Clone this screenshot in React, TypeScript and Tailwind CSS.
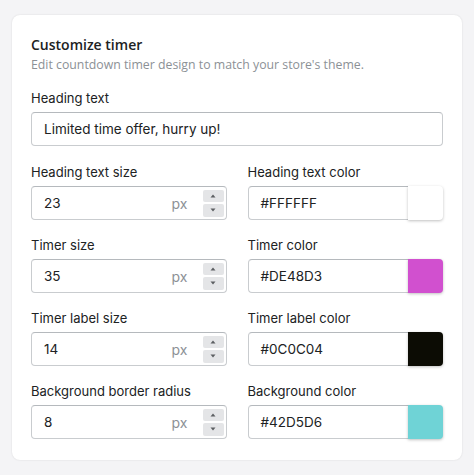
import React from "react";

const ui = { fontFamily: "Inter, 'Liberation Sans', sans-serif" };
const geo = { fontFamily: "'Open Sans', Lato, sans-serif" };

function Label({ children }: { children: React.ReactNode }) {
  return (
    <div className="mb-[4px] h-[20px] text-[13px] leading-[20px] text-[#202223]" style={ui}>
      {children}
    </div>
  );
}

function NumberField({ label, value }: { label: string; value: string }) {
  return (
    <div>
      <Label>{label}</Label>
      <div className="flex h-[34px] items-center rounded-[4px] border border-[#c9cccf] border-t-[#b5b9bd] bg-white pl-[12px] pr-[2px]" style={ui}>
        <span className="flex-1 text-[13.5px] text-[#202223]">{value}</span>
        <span className="mr-[15px] text-[14px] text-[#8c9196]">px</span>
        <div className="flex flex-col gap-[2px]">
          <button className="flex h-[12px] w-[21px] items-center justify-center rounded-[2px] bg-[#e4e5e7]">
            <svg width="6" height="4" viewBox="0 0 6 4"><path d="M3 0.5 L5.5 3.5 H0.5 Z" fill="#5c5f62" /></svg>
          </button>
          <button className="flex h-[13px] w-[21px] items-center justify-center rounded-[2px] bg-[#e4e5e7]">
            <svg width="6" height="4" viewBox="0 0 6 4"><path d="M0.5 0.5 H5.5 L3 3.5 Z" fill="#5c5f62" /></svg>
          </button>
        </div>
      </div>
    </div>
  );
}

function ColorField({ label, value, color }: { label: string; value: string; color: string }) {
  return (
    <div>
      <Label>{label}</Label>
      <div className="flex h-[34px]" style={ui}>
        <div className="flex flex-1 items-center rounded-l-[4px] border border-r-0 border-[#c9cccf] border-t-[#b5b9bd] bg-white pl-[12px] text-[13.5px] text-[#202223]">
          {value}
        </div>
        <div
          className="w-[35px] rounded-r-[4px] shadow-[0_1px_3px_rgba(0,0,0,0.25)]"
          style={{ background: color }}
        />
      </div>
    </div>
  );
}

export default function App() {
  return (
    <div className="h-[475px] w-[474px] bg-[#f4f4f6] pl-[12px] pt-[15px]">
      <div className="h-[445px] w-[450px] rounded-[8px] bg-white px-[19px] pt-[20px] shadow-[0_0_2px_rgba(0,0,0,0.12)]">
        <h2 className="text-[14px] font-semibold leading-[20px] text-[#202223]" style={geo}>
          Customize timer
        </h2>
        <p className="mt-[2px] text-[12.3px] leading-[16px] text-[#8c9196]" style={geo}>
          Edit countdown timer design to match your store's theme.
        </p>
        <div className="mt-[15px]">
          <Label>Heading text</Label>
          <div className="flex h-[34px] items-center rounded-[4px] border border-[#c9cccf] border-t-[#b5b9bd] bg-white pl-[12px] text-[13.5px] text-[#202223]" style={ui}>
            Limited time offer, hurry up!
          </div>
        </div>
        <div className="mt-[16px] grid grid-cols-2 gap-x-[21px] gap-y-[15px]">
          <NumberField label="Heading text size" value="23" />
          <ColorField label="Heading text color" value="#FFFFFF" color="#ffffff" />
          <NumberField label="Timer size" value="35" />
          <ColorField label="Timer color" value="#DE48D3" color="#d150cf" />
          <NumberField label="Timer label size" value="14" />
          <ColorField label="Timer label color" value="#0C0C04" color="#0c0c04" />
          <NumberField label="Background border radius" value="8" />
          <ColorField label="Background color" value="#42D5D6" color="#6fd3d6" />
        </div>
      </div>
    </div>
  );
}
